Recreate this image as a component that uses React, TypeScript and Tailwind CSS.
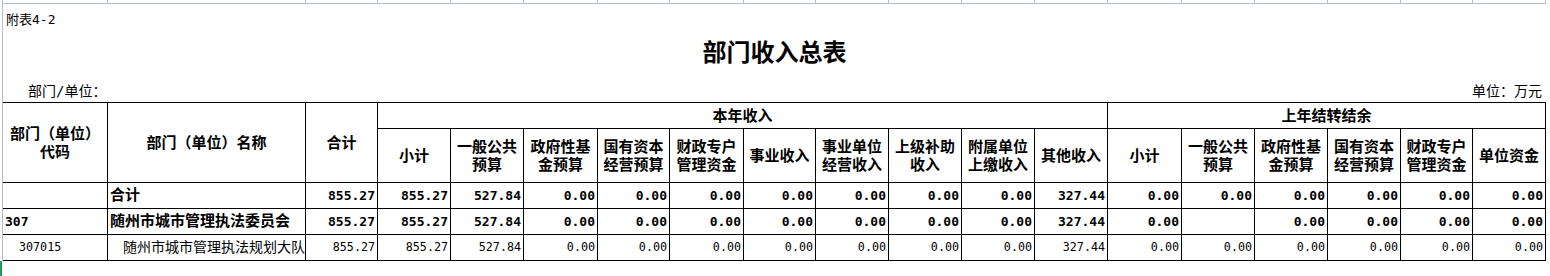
import React from "react";

// 列宽（含右边框），与表格竖线位置对齐
const GRID =
  "grid grid-cols-[105px_198px_72px_73px_73px_74px_72px_74px_72px_73px_73px_73px_73px_74px_73px_73px_73px_72px_73px]";

const FONT = "font-['DejaVu_Sans_Mono','Noto_Sans_CJK_SC',monospace]";

interface RowData {
  code: string;
  name: string;
  values: string[];
  bold: boolean;
}

const rows: RowData[] = [
  {
    code: "",
    name: "合计",
    values: ["855.27", "855.27", "527.84", "0.00", "0.00", "0.00", "0.00", "0.00", "0.00", "0.00", "327.44", "0.00", "0.00", "0.00", "0.00", "0.00", "0.00"],
    bold: true,
  },
  {
    code: "307",
    name: "随州市城市管理执法委员会",
    values: ["855.27", "855.27", "527.84", "0.00", "0.00", "0.00", "0.00", "0.00", "0.00", "0.00", "327.44", "0.00", "", "0.00", "0.00", "0.00", "0.00"],
    bold: true,
  },
  {
    code: "307015",
    name: "随州市城市管理执法规划大队",
    values: ["855.27", "855.27", "527.84", "0.00", "0.00", "0.00", "0.00", "0.00", "0.00", "0.00", "327.44", "0.00", "0.00", "0.00", "0.00", "0.00", "0.00"],
    bold: false,
  },
];

const thisYear = [
  ["小计"],
  ["一般公共", "预算"],
  ["政府性基", "金预算"],
  ["国有资本", "经营预算"],
  ["财政专户", "管理资金"],
  ["事业收入"],
  ["事业单位", "经营收入"],
  ["上级补助", "收入"],
  ["附属单位", "上缴收入"],
  ["其他收入"],
];

const lastYear = [
  ["小计"],
  ["一般公共", "预算"],
  ["政府性基", "金预算"],
  ["国有资本", "经营预算"],
  ["财政专户", "管理资金"],
  ["单位资金"],
];

const cell = "border-r border-b border-black overflow-hidden whitespace-nowrap";

function HeadCell({ lines, className = "" }: { lines: string[]; className?: string }) {
  return (
    <div className={`${cell} flex flex-col items-center justify-center text-[15px] leading-[18px] font-bold ${className}`}>
      {lines.map((l) => (
        <span key={l}>{l}</span>
      ))}
    </div>
  );
}

export default function App() {
  return (
    <div className={`w-[1550px] h-[276px] bg-white overflow-hidden text-black ${FONT}`}>
      <div className="ml-[2px] w-[1544px] border-l border-[#b3bbd5]">
        {/* 顶部网格线 */}
        <div className={`${GRID} h-[4px] border-b border-[#b3bbd5]`}>
          {Array.from({ length: 19 }).map((_, i) => (
            <div key={i} className="border-r border-[#b3bbd5]" />
          ))}
        </div>

        {/* 标题区 */}
        <div className="h-[98px] flex flex-col">
          <div className="h-[26px] pl-[3px] pt-[6px] text-[13px] leading-[20px]">附表4-2</div>
          <div className="h-[46px] flex items-center justify-center text-[24px] font-bold">
            部门收入总表
          </div>
          <div className="h-[26px] pt-[5px] flex justify-between text-[14px] leading-[20px] pr-[4px]">
            <span className="pl-[25px]">部门/单位：</span>
            <span>单位：万元</span>
          </div>
        </div>

        {/* 表格 */}
        <div className={`${GRID} grid-rows-[26px_54px_26px_26px_26px] w-[1543px] border-t border-black`}>
          <HeadCell lines={["部门（单位）", "代码"]} className="row-span-2" />
          <HeadCell lines={["部门（单位）名称"]} className="row-span-2" />
          <HeadCell lines={["合计"]} className="row-span-2" />
          <HeadCell lines={["本年收入"]} className="col-span-10" />
          <HeadCell lines={["上年结转结余"]} className="col-span-6" />
          {thisYear.map((l, i) => (
            <HeadCell key={`t${i}`} lines={l} />
          ))}
          {lastYear.map((l, i) => (
            <HeadCell key={`l${i}`} lines={l} />
          ))}

          {rows.map((r) => (
            <React.Fragment key={r.name}>
              <div
                className={`${cell} flex items-center ${
                  r.bold ? "font-bold text-[13px] pl-[2px]" : "text-[11.7px] pl-[16px]"
                }`}
              >
                {r.code}
              </div>
              <div
                className={`${cell} flex items-center ${
                  r.bold ? "font-bold text-[15px] pl-[2px]" : "text-[14px] pl-[15px]"
                }`}
              >
                {r.name}
              </div>
              {r.values.map((v, i) => (
                <div
                  key={i}
                  className={`${cell} flex items-center justify-end pr-[2px] ${
                    r.bold ? "font-bold text-[13px]" : "text-[11.7px]"
                  }`}
                >
                  {v}
                </div>
              ))}
            </React.Fragment>
          ))}
        </div>
      </div>
      <div className="h-[16px] w-[2px] bg-[#1f9d55]" />
    </div>
  );
}
